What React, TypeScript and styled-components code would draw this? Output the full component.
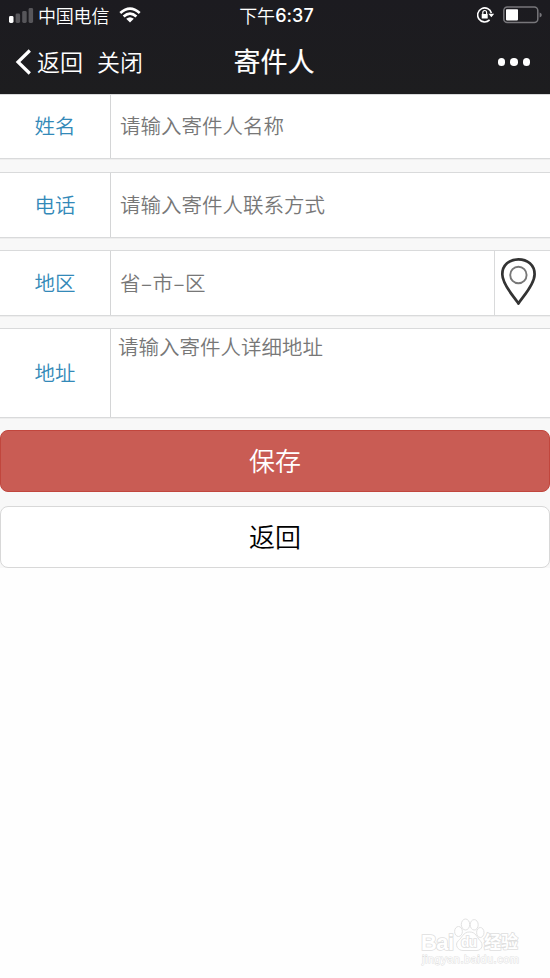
import React from "react";
import styled, { createGlobalStyle } from "styled-components";

const Global = createGlobalStyle`
  * { box-sizing: border-box; }
  body { margin: 0; background: #fff; font-family: "Noto Sans CJK SC", "Liberation Sans", sans-serif; }
`;

const Screen = styled.div`
  width: 550px;
  height: 978px;
  display: flex;
  flex-direction: column;
  background: #fefefe;
  overflow: hidden;
`;

const Header = styled.header`
  height: 94px;
  flex: none;
  background: linear-gradient(#1c1b20, #1d1d1f);
  color: #fff;
`;

const StatusBar = styled.div`
  height: 30px;
  display: grid;
  grid-template-columns: 1fr 76px 1fr;
  grid-template-rows: 30px;
  align-items: center;
  padding: 0 8px 0 9px;
`;

const StatusSide = styled.div<{ $end?: boolean }>`
  display: flex;
  align-items: center;
  justify-content: ${(p) => (p.$end ? "flex-end" : "flex-start")};
`;

const Carrier = styled.span`
  font-size: 18px;
  line-height: 26px;
  font-weight: 350;
  margin: 0 10px 1px 4px;
  letter-spacing: -0.2px;
`;

const Clock = styled.div`
  display: flex;
  align-items: center;
  justify-content: center;
  font-size: 18px;
  line-height: 26px;
  font-weight: 350;
  white-space: nowrap;
  padding: 0 0 1px 2px;
`;

const Digits = styled.span`
  font-family: Inter, "Liberation Sans", sans-serif;
  font-weight: 500;
  font-size: 18px;
  letter-spacing: 0.1px;
  padding-top: 2px;
`;

const NavBar = styled.nav`
  height: 64px;
  display: grid;
  grid-template-columns: 1fr 90px 1fr;
  align-items: center;
  padding: 0 20px 0 15px;
`;

const NavActions = styled.div`
  display: flex;
  align-items: center;
`;

const NavLink = styled.a<{ $gap: number }>`
  font-size: 23px;
  font-weight: 350;
  line-height: 34px;
  margin-left: ${(p) => p.$gap}px;
  padding-bottom: 2px;
`;

const Title = styled.h1`
  margin: 0 0 2px 3px;
  font-size: 27px;
  line-height: 38px;
  font-weight: 400;
  -webkit-text-stroke: 0.15px #fff;
  text-align: center;
  white-space: nowrap;
`;

const More = styled.div`
  display: flex;
  justify-content: flex-end;
  gap: 5px;
`;

const Dot = styled.i`
  width: 7.5px;
  height: 7.5px;
  border-radius: 50%;
  background: #fff;
`;

const Form = styled.main`
  display: flex;
  flex-direction: column;
  background: #f8f8f8;
`;

const Row = styled.div<{ $h: number; $gap: number }>`
  display: flex;
  height: ${(p) => p.$h}px;
  margin-bottom: ${(p) => p.$gap}px;
  background: #fff;
  border-top: 1px solid #d9dadb;
  border-bottom: 1px solid #d9dadb;
  box-shadow: 0 1px 0 #eeeeee;
`;

const Label = styled.label`
  width: 111px;
  display: flex;
  align-items: center;
  justify-content: center;
  border-right: 1px solid #d4d5d6;
  color: #3389b8;
  font-size: 20.5px;
  font-weight: 350;
  padding-bottom: 3px;
`;

const Placeholder = styled.div<{ $multi?: boolean }>`
  flex: 1;
  display: flex;
  align-items: ${(p) => (p.$multi ? "flex-start" : "center")};
  padding: ${(p) => (p.$multi ? "2px 0 0 7px" : "0 0 3px 9px")};
  color: #777;
  font-size: 20.5px;
  font-weight: 350;
  line-height: 30px;
`;

const Dash = styled.span`
  display: inline-block;
  width: 12px;
  text-align: center;
`;

const Locate = styled.button`
  width: 56px;
  border: 0;
  border-left: 1px solid #d9dadb;
  background: #fff;
  padding: 5px 0 0 5px;
  display: flex;
  align-items: flex-start;
`;

const Button = styled.button<{ $primary?: boolean }>`
  width: 100%;
  height: 62px;
  margin-bottom: ${(p) => (p.$primary ? "14px" : "0")};
  padding: 0 0 3px;
  border: 1px solid ${(p) => (p.$primary ? "#c1463d" : "#d8d8d8")};
  border-radius: 8px;
  background: ${(p) => (p.$primary ? "#c95c54" : "#fff")};
  color: ${(p) => (p.$primary ? "#fff" : "#000")};
  font-family: inherit;
  font-size: 26px;
  font-weight: 350;
`;

const Watermark = styled.footer`
  margin: auto 0 10px 420px;
  width: 110px;
  line-height: 0;
`;

const SignalIcon = () => (
  <svg width="25" height="16" viewBox="0 0 25 16">
    <rect x="0" y="9" width="4.5" height="7" rx="1.4" fill="#fff" />
    <rect x="6.6" y="6.5" width="4.5" height="9.5" rx="1.4" fill="#57565a" />
    <rect x="13.2" y="4" width="4.5" height="12" rx="1.4" fill="#57565a" />
    <rect x="19.6" y="1" width="4.5" height="15" rx="1.4" fill="#57565a" />
  </svg>
);

const WifiIcon = () => (
  <svg width="22" height="16" viewBox="0 0 22 16">
    <g fill="none" stroke="#fff" strokeWidth="2.7">
      <path d="M1.3 6Q11-2.8 20.7 6" />
      <path d="M4.6 9.5Q11 3.6 17.4 9.5" />
    </g>
    <path d="M7.2 11.8Q11 8.8 14.8 11.8L11 15.6Z" fill="#fff" />
  </svg>
);

const LockIcon = () => (
  <svg width="17" height="16" viewBox="0 0 17 16">
    <path d="M14.4 6A7 7 0 1 0 12.6 12.9" fill="none" stroke="#fff" strokeWidth="1.6" />
    <path d="M11.4 6.8H17.2L14.4 10.2Z" fill="#fff" />
    <rect x="4.7" y="7" width="6" height="4.6" rx=".5" fill="#fff" />
    <path d="M5.8 7.4V5.4a1.9 1.9 0 0 1 3.8 0v2" fill="none" stroke="#fff" strokeWidth="1.2" />
  </svg>
);

const BatteryIcon = () => (
  <svg width="39" height="18" viewBox="0 0 39 18">
    <rect x=".8" y="1" width="34" height="15.6" rx="3.5" fill="none" stroke="#77767a" strokeWidth="1.5" />
    <rect x="3" y="3.2" width="12" height="11.2" rx=".8" fill="#fff" />
    <path d="M36.6 6.5Q38.8 7.2 38.8 9T36.6 11.5Z" fill="#77767a" />
  </svg>
);

const BatterySlot = styled.span`
  display: flex;
  margin-left: 9px;
`;

const BackIcon = () => (
  <svg width="17" height="28" viewBox="0 0 17 28">
    <path d="M14.8 2.5L3 14L14.8 25.5" fill="none" stroke="#fff" strokeWidth="3.2" />
  </svg>
);

const PinIcon = () => (
  <svg width="38" height="50" viewBox="0 0 38 50">
    <path
      d="M18.4 47.5C15.8 42.6 2.3 29.4 2.3 18.2C2.3 9 9.4 3.3 18.4 3.3S34.6 9 34.6 18.2C34.6 29.4 21 42.6 18.4 47.5Z"
      fill="none"
      stroke="#333"
      strokeWidth="2.7"
      strokeLinejoin="round"
    />
    <circle cx="18.4" cy="19" r="8.2" fill="none" stroke="#777" strokeWidth="1.9" />
  </svg>
);

const BrandMark = () => (
  <svg width="104" height="51" viewBox="0 0 104 51">
    <g fill="#fff" stroke="#e2e2e2" strokeWidth="1">
      <ellipse cx="38.5" cy="14.5" rx="3.9" ry="5" />
      <ellipse cx="45.5" cy="7.5" rx="4.2" ry="5.5" />
      <ellipse cx="54.2" cy="7.8" rx="4" ry="5.2" />
      <ellipse cx="60.3" cy="15.5" rx="3.7" ry="5" />
      <path d="M49.5 15C43 15 42 21 38.5 23.5C34 28 38 33.5 43 33.5H57C62.5 33 63.5 27 60 23.5C56.5 20 56 15 49.5 15Z" />
    </g>
    <g fill="#fff" stroke="#dedede" strokeWidth="1.6" paintOrder="stroke">
      <text x="1" y="32.5" fontFamily="Liberation Sans, sans-serif" fontWeight="700" fontSize="22" textLength="33">Bai</text>
      <text x="41" y="30" fontFamily="Liberation Sans, sans-serif" fontWeight="700" fontSize="14" textLength="16">du</text>
      <text x="64" y="31" fontFamily="Noto Sans CJK SC, sans-serif" fontWeight="700" fontSize="17">经验</text>
      <text x="2" y="46" fontFamily="Liberation Sans, sans-serif" fontSize="11" textLength="97" strokeWidth="1">jingyan.baidu.com</text>
    </g>
  </svg>
);

export default function App() {
  return (
    <Screen>
      <Global />
      <Header>
        <StatusBar>
          <StatusSide>
            <SignalIcon />
            <Carrier>中国电信</Carrier>
            <WifiIcon />
          </StatusSide>
          <Clock>
            下午<Digits>6:37</Digits>
          </Clock>
          <StatusSide $end>
            <LockIcon />
            <BatterySlot>
              <BatteryIcon />
            </BatterySlot>
          </StatusSide>
        </StatusBar>
        <NavBar>
          <NavActions>
            <BackIcon />
            <NavLink $gap={5}>返回</NavLink>
            <NavLink $gap={14}>关闭</NavLink>
          </NavActions>
          <Title>寄件人</Title>
          <More>
            <Dot />
            <Dot />
            <Dot />
          </More>
        </NavBar>
      </Header>
      <Form>
        <Row $h={65} $gap={13}>
          <Label>姓名</Label>
          <Placeholder>请输入寄件人名称</Placeholder>
        </Row>
        <Row $h={66} $gap={12}>
          <Label>电话</Label>
          <Placeholder>请输入寄件人联系方式</Placeholder>
        </Row>
        <Row $h={66} $gap={12}>
          <Label>地区</Label>
          <Placeholder>
            省<Dash>–</Dash>市<Dash>–</Dash>区
          </Placeholder>
          <Locate aria-label="定位">
            <PinIcon />
          </Locate>
        </Row>
        <Row $h={90} $gap={12}>
          <Label>地址</Label>
          <Placeholder $multi>请输入寄件人详细地址</Placeholder>
        </Row>
        <Button $primary>保存</Button>
        <Button>返回</Button>
      </Form>
      <Watermark>
        <BrandMark />
      </Watermark>
    </Screen>
  );
}
